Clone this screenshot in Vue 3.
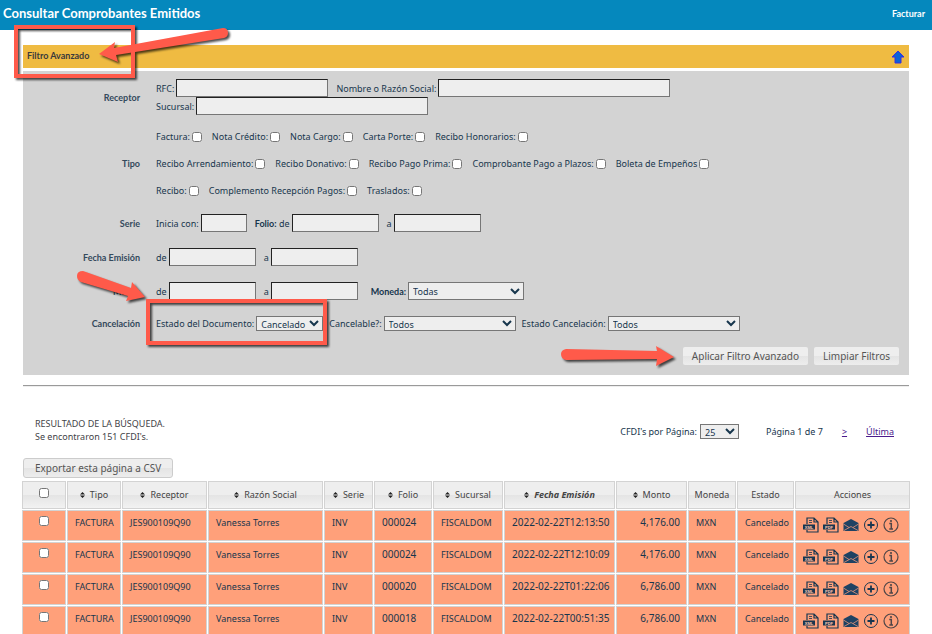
<script setup>
import { ref } from 'vue'

const tipos = [
  ['Factura:', 'Nota Crédito:', 'Nota Cargo:', 'Carta Porte:', 'Recibo Honorarios:'],
  ['Recibo Arrendamiento:', 'Recibo Donativo:', 'Recibo Pago Prima:', 'Comprobante Pago a Plazos:', 'Boleta de Empeños'],
  ['Recibo:', 'Complemento Recepción Pagos:', 'Traslados:']
]

const columnas = [
  { titulo: 'Tipo', orden: true, clase: 'c-tipo' },
  { titulo: 'Receptor', orden: true, clase: 'c-receptor' },
  { titulo: 'Razón Social', orden: true, clase: 'c-razon' },
  { titulo: 'Serie', orden: true, clase: 'c-serie' },
  { titulo: 'Folio', orden: true, clase: 'c-folio' },
  { titulo: 'Sucursal', orden: true, clase: 'c-sucursal' },
  { titulo: 'Fecha Emisión', orden: true, clase: 'c-fecha' },
  { titulo: 'Monto', orden: true, clase: 'c-monto' },
  { titulo: 'Moneda', orden: false, clase: 'c-moneda' },
  { titulo: 'Estado', orden: false, clase: 'c-estado' },
  { titulo: 'Acciones', orden: false, clase: 'c-acciones' }
]

const comprobantes = ref([
  { id: 1, folio: '000024', fecha: '2022-02-22T12:13:50', monto: '4,176.00' },
  { id: 2, folio: '000024', fecha: '2022-02-22T12:10:09', monto: '4,176.00' },
  { id: 3, folio: '000020', fecha: '2022-02-22T01:22:06', monto: '6,786.00' },
  { id: 4, folio: '000018', fecha: '2022-02-22T00:51:35', monto: '6,786.00' }
])

const seleccionados = ref([])
const todos = ref(false)

const marcarTodos = () => {
  seleccionados.value = todos.value ? comprobantes.value.map(c => c.id) : []
}
</script>

<template>
  <div class="pagina">
    <header class="barra">
      <h1>Consultar Comprobantes Emitidos</h1>
      <a href="#" class="facturar">Facturar</a>
    </header>

    <main class="contenido">
      <div class="titulo-filtro">
        <h2>Filtro Avanzado</h2>
        <button type="button" class="subir" aria-label="Ocultar filtro">
          <svg width="14" height="14" viewBox="0 0 14 14">
            <path d="M7 1L13 7H10V13H4V7H1Z" fill="#0b62d6" stroke="#3a2be0" stroke-width="1" />
          </svg>
        </button>
      </div>

      <form class="filtro" @submit.prevent>
        <div class="fila receptor">
          <span class="etiqueta">Receptor</span>
          <div class="campos">
            <div class="linea">
              <label for="rfc">RFC:</label>
              <input id="rfc" type="text" class="w-rfc" />
              <label for="nombre" class="sep">Nombre o Razón Social:</label>
              <input id="nombre" type="text" class="w-nombre" />
            </div>
            <div class="linea">
              <label for="sucursal">Sucursal:</label>
              <input id="sucursal" type="text" class="w-nombre" />
            </div>
          </div>
        </div>

        <div class="fila tipo">
          <span class="etiqueta">Tipo</span>
          <div class="campos">
            <div v-for="(grupo, i) in tipos" :key="i" class="linea casillas">
              <label v-for="t in grupo" :key="t">{{ t }}<input type="checkbox" /></label>
            </div>
          </div>
        </div>

        <div class="fila">
          <span class="etiqueta">Serie</span>
          <div class="linea">
            <label for="serie">Inicia con:</label>
            <input id="serie" type="text" class="w-serie" />
            <label for="folio-de" class="sep"><b>Folio:</b> de</label>
            <input id="folio-de" type="text" class="w-fecha" />
            <label for="folio-a" class="sep">a</label>
            <input id="folio-a" type="text" class="w-fecha" />
          </div>
        </div>

        <div class="fila">
          <span class="etiqueta">Fecha Emisión</span>
          <div class="linea">
            <label for="emision-de">de</label>
            <input id="emision-de" type="text" class="w-fecha" />
            <label for="emision-a" class="sep">a</label>
            <input id="emision-a" type="text" class="w-fecha" />
          </div>
        </div>

        <div class="fila">
          <span class="etiqueta">Monto</span>
          <div class="linea">
            <label for="monto-de">de</label>
            <input id="monto-de" type="text" class="w-fecha" />
            <label for="monto-a" class="sep">a</label>
            <input id="monto-a" type="text" class="w-fecha" />
            <label for="moneda" class="sep-l"><b>Moneda:</b></label>
            <select id="moneda" class="w-moneda alto"><option>Todas</option></select>
          </div>
        </div>

        <div class="fila">
          <span class="etiqueta">Cancelación</span>
          <div class="linea">
            <label for="estado-doc">Estado del Documento:</label>
            <select id="estado-doc" class="w-estado"><option>Cancelado</option></select>
            <label for="cancelable" class="sep-s">Cancelable?:</label>
            <select id="cancelable" class="w-todos"><option>Todos</option></select>
            <label for="estado-can" class="sep-s">Estado Cancelación:</label>
            <select id="estado-can" class="w-todos"><option>Todos</option></select>
          </div>
        </div>

        <div class="botones">
          <button type="submit" class="boton">Aplicar Filtro Avanzado</button>
          <button type="reset" class="boton">Limpiar Filtros</button>
        </div>
      </form>

      <hr />

      <div class="resumen">
        <p>RESULTADO DE LA BÚSQUEDA.<br />Se encontraron 151 CFDI's.</p>
        <div class="paginacion">
          <label for="por-pagina">CFDI's por Página:</label>
          <select id="por-pagina" class="w-pagina"><option>25</option></select>
          <span class="actual">Página 1 de 7</span>
          <a href="#">&gt;</a>
          <a href="#">Última</a>
        </div>
      </div>

      <button type="button" class="boton exportar">Exportar esta página a CSV</button>

      <table>
        <thead>
          <tr>
            <th class="c-check"><input v-model="todos" type="checkbox" aria-label="Seleccionar todos" @change="marcarTodos" /></th>
            <th v-for="c in columnas" :key="c.titulo" :class="c.clase">
              <svg v-if="c.orden" class="orden" width="5" height="6" viewBox="0 0 5 6">
                <path d="M0 2.5L2.5 0L5 2.5ZM0 3.5L2.5 6L5 3.5Z" fill="#222" />
              </svg>{{ c.titulo }}
            </th>
          </tr>
        </thead>
        <tbody>
          <tr v-for="c in comprobantes" :key="c.id">
            <td class="centro"><input v-model="seleccionados" type="checkbox" :value="c.id" :aria-label="c.folio" /></td>
            <td>FACTURA</td>
            <td>JES900109Q90</td>
            <td>Vanessa Torres</td>
            <td>INV</td>
            <td class="numero">{{ c.folio }}</td>
            <td>FISCALDOM</td>
            <td class="numero">{{ c.fecha }}</td>
            <td class="numero derecha">{{ c.monto }}</td>
            <td>MXN</td>
            <td>Cancelado</td>
            <td class="celda-acciones">
              <div class="acciones">
                <button v-for="f in ['XML', 'PDF']" :key="f" type="button" :aria-label="f">
                  <svg width="16" height="16" viewBox="0 0 16 16">
                    <path d="M4 7V1H11L15 5V15H4V13M11 1V5H15" fill="none" stroke="#173650" stroke-width="1.2" />
                    <path d="M6 3.5H9M6 5.5H9" stroke="#173650" stroke-width="0.8" />
                    <rect x="0" y="7.5" width="12" height="5" fill="#173650" />
                    <text x="6" y="11.7" text-anchor="middle" class="formato">{{ f }}</text>
                  </svg>
                </button>
                <button type="button" aria-label="Enviar por correo">
                  <svg width="16" height="16" viewBox="0 0 16 16">
                    <path d="M0.5 6L8 2L15.5 6V14H0.5Z" fill="#1f4263" />
                    <path d="M0.5 7L6 10.5M15.5 7L10 10.5M1 13.5L8 9.5L15 13.5" fill="none" stroke="#e8967a" stroke-width="0.8" />
                  </svg>
                </button>
                <button type="button" aria-label="Agregar">
                  <svg width="16" height="16" viewBox="0 0 16 16">
                    <circle cx="8" cy="8" r="6.5" fill="none" stroke="#173650" stroke-width="1" />
                    <path d="M8 4.5V11.5M4.5 8H11.5" stroke="#173650" stroke-width="1.8" />
                  </svg>
                </button>
                <button type="button" aria-label="Información">
                  <svg width="16" height="16" viewBox="0 0 16 16">
                    <circle cx="8" cy="8" r="7" fill="none" stroke="#4f4648" stroke-width="1.2" />
                    <path d="M6.3 6.5H8.3V12M6.3 12H10" fill="none" stroke="#4f4648" stroke-width="1.5" />
                    <circle cx="8" cy="4" r="1.1" fill="#4f4648" />
                  </svg>
                </button>
              </div>
            </td>
          </tr>
        </tbody>
      </table>
    </main>

    <!-- Marcas y flechas de la guía -->
    <svg class="marcas" width="932" height="634" viewBox="0 0 932 634" aria-hidden="true">
      <g fill="none" stroke="#ff5a4a" stroke-width="4">
        <rect x="16" y="27" width="117" height="49" />
        <rect x="148" y="301" width="177" height="42" />
      </g>
      <g fill="#ff5a4a">
        <path d="M99 54L115 42L114 48L223 28Q228 28 228 33Q228 37 224 38L116 55L118 62Z" />
        <path d="M145 297L132 282L131 288L83 271Q77 271 77 276Q77 280 81 282L128 296L126 301Z" />
        <path d="M674 357L656 346L657 351L566 349Q561 350 561 354Q561 359 566 360L657 359L656 366Z" />
      </g>
    </svg>
  </div>
</template>

<style>
body {
  background: #fff;
}
</style>

<style scoped>
.pagina {
  position: relative;
  height: 100vh;
  overflow: hidden;
  font-family: "Noto Sans", "Liberation Sans", sans-serif;
  font-size: 9px;
  line-height: 13px;
  color: #17364d;
}

.barra {
  display: flex;
  justify-content: space-between;
  align-items: center;
  height: 30px;
  padding: 0 7px 3px 3px;
  box-sizing: border-box;
  background: #0588bd;
  color: #fff;
}

h1,
h2,
.facturar,
.etiqueta,
.fila b {
  font-family: Lato, "Liberation Sans", sans-serif;
  font-weight: bold;
}

h1 {
  margin: 0;
  font-size: 13px;
}

.facturar {
  color: #fff;
  text-decoration: none;
}

.contenido {
  padding: 15px 22px 0 23px;
}

.titulo-filtro {
  display: flex;
  justify-content: space-between;
  align-items: center;
  height: 23px;
  margin-right: 1px;
  padding: 0 4px;
  background: #efbb42;
}

h2 {
  margin: 0 0 2px;
  font-size: 9px;
  color: #3a3a3c;
}

.subir {
  display: flex;
  padding: 0;
  border: none;
  background: none;
}

.filtro {
  margin: 3px 1px 0 0;
  padding: 8px 10px 10px 0;
  background: #d3d3d3;
}

.fila {
  display: grid;
  grid-template-columns: 117px 1fr;
  column-gap: 16px;
  align-items: center;
  margin-bottom: 16px;
}

.fila.receptor {
  margin-bottom: 8px;
}

.fila.tipo {
  margin-bottom: 10px;
}

.etiqueta {
  text-align: right;
  color: #34495c;
}

.linea {
  display: flex;
  align-items: center;
  gap: 2px;
}

.linea .sep {
  margin-left: 6px;
}

.linea .sep-s {
  margin-left: 4px;
}

.linea .sep-l {
  margin-left: 11px;
}

.casillas {
  height: 27px;
  gap: 10px;
}

.casillas label {
  display: flex;
  align-items: center;
  gap: 2px;
}

input[type="text"],
select {
  box-sizing: border-box;
  height: 18px;
  padding: 0 2px;
  border: 1px solid #767676;
  border-radius: 0;
  background-color: #eee;
  font: inherit;
  color: #17364d;
}

input[type="text"] {
  border-top-color: #222;
  border-left-color: #222;
}

select {
  height: 15px;
  padding: 0;
}

select.alto {
  height: 18px;
}

input[type="checkbox"] {
  width: 10px;
  height: 10px;
  margin: 0;
}

.w-rfc { width: 152px; }
.w-nombre { width: 232px; }
.w-serie { width: 46px; }
.w-fecha { width: 87px; }
.w-moneda { width: 116px; }
.w-estado { width: 67px; }
.w-todos { width: 132px; }
.w-pagina { width: 39px; }

.botones {
  display: flex;
  justify-content: flex-end;
  gap: 6px;
}

.boton {
  height: 18px;
  padding: 0 9px;
  border: none;
  border-radius: 2px;
  background: linear-gradient(#eee 50%, #e4e4e4 50%, #ededed);
  font-family: inherit;
  font-size: 10px;
  color: #555;
}

hr {
  height: 1px;
  margin: 10px 1px 0 0;
  border: none;
  border-top: 1px solid #9a9a9a;
  background: #eee;
}

.resumen {
  display: flex;
  justify-content: space-between;
  align-items: center;
  margin: 30px 16px 15px 12px;
}

.resumen p {
  margin: 0;
  color: #3f4347;
}

.paginacion {
  display: flex;
  align-items: center;
  gap: 3px;
  padding-top: 3px;
}

.paginacion .actual {
  margin-left: 24px;
}

.paginacion a {
  margin-left: 16px;
  color: #4b1a8c;
}

.exportar {
  display: block;
  height: 20px;
  padding: 0 11px;
  border: 1px solid #ccc;
  border-radius: 3px;
}

table {
  width: calc(100% + 3px);
  margin: 2px 0 0 -2px;
  table-layout: fixed;
  border-collapse: separate;
  border-spacing: 1px;
}

th,
td {
  box-sizing: border-box;
  border: 1px solid #d3d3d3;
  white-space: nowrap;
}

th {
  height: 28px;
  padding: 0 0 1px;
  background: linear-gradient(#eee 50%, #e4e4e4 50%, #f2f2f2);
  font-weight: normal;
  color: #444;
}

td {
  height: 31px;
  padding: 5px 7px 11px;
  background: #ffa07a;
  vertical-align: top;
}

td.centro {
  text-align: center;
}

td.numero {
  font-size: 10px;
}

td.derecha {
  text-align: right;
  padding-right: 6px;
}

td.celda-acciones {
  padding: 6px 7px 0;
}

.orden {
  margin-right: 5px;
}

.c-check { width: 44px; }
.c-tipo { width: 54px; }
.c-receptor { width: 85px; }
.c-razon { width: 115px; }
.c-serie { width: 49px; }
.c-folio { width: 58px; }
.c-sucursal { width: 70px; }
.c-fecha {
  width: 111px;
  font-style: italic;
  font-weight: bold;
}
.c-monto { width: 71px; }
.c-moneda { width: 48px; }
.c-estado { width: 57px; }

.acciones {
  display: flex;
  gap: 4px;
}

.acciones button {
  display: flex;
  padding: 0;
  border: none;
  background: none;
}

.formato {
  font: bold 4px "Liberation Sans", sans-serif;
  fill: #ffc8b0;
}

.marcas {
  position: absolute;
  top: 0;
  left: 0;
  pointer-events: none;
  filter: drop-shadow(2px 2px 1px rgba(0, 0, 0, 0.7));
}
</style>
